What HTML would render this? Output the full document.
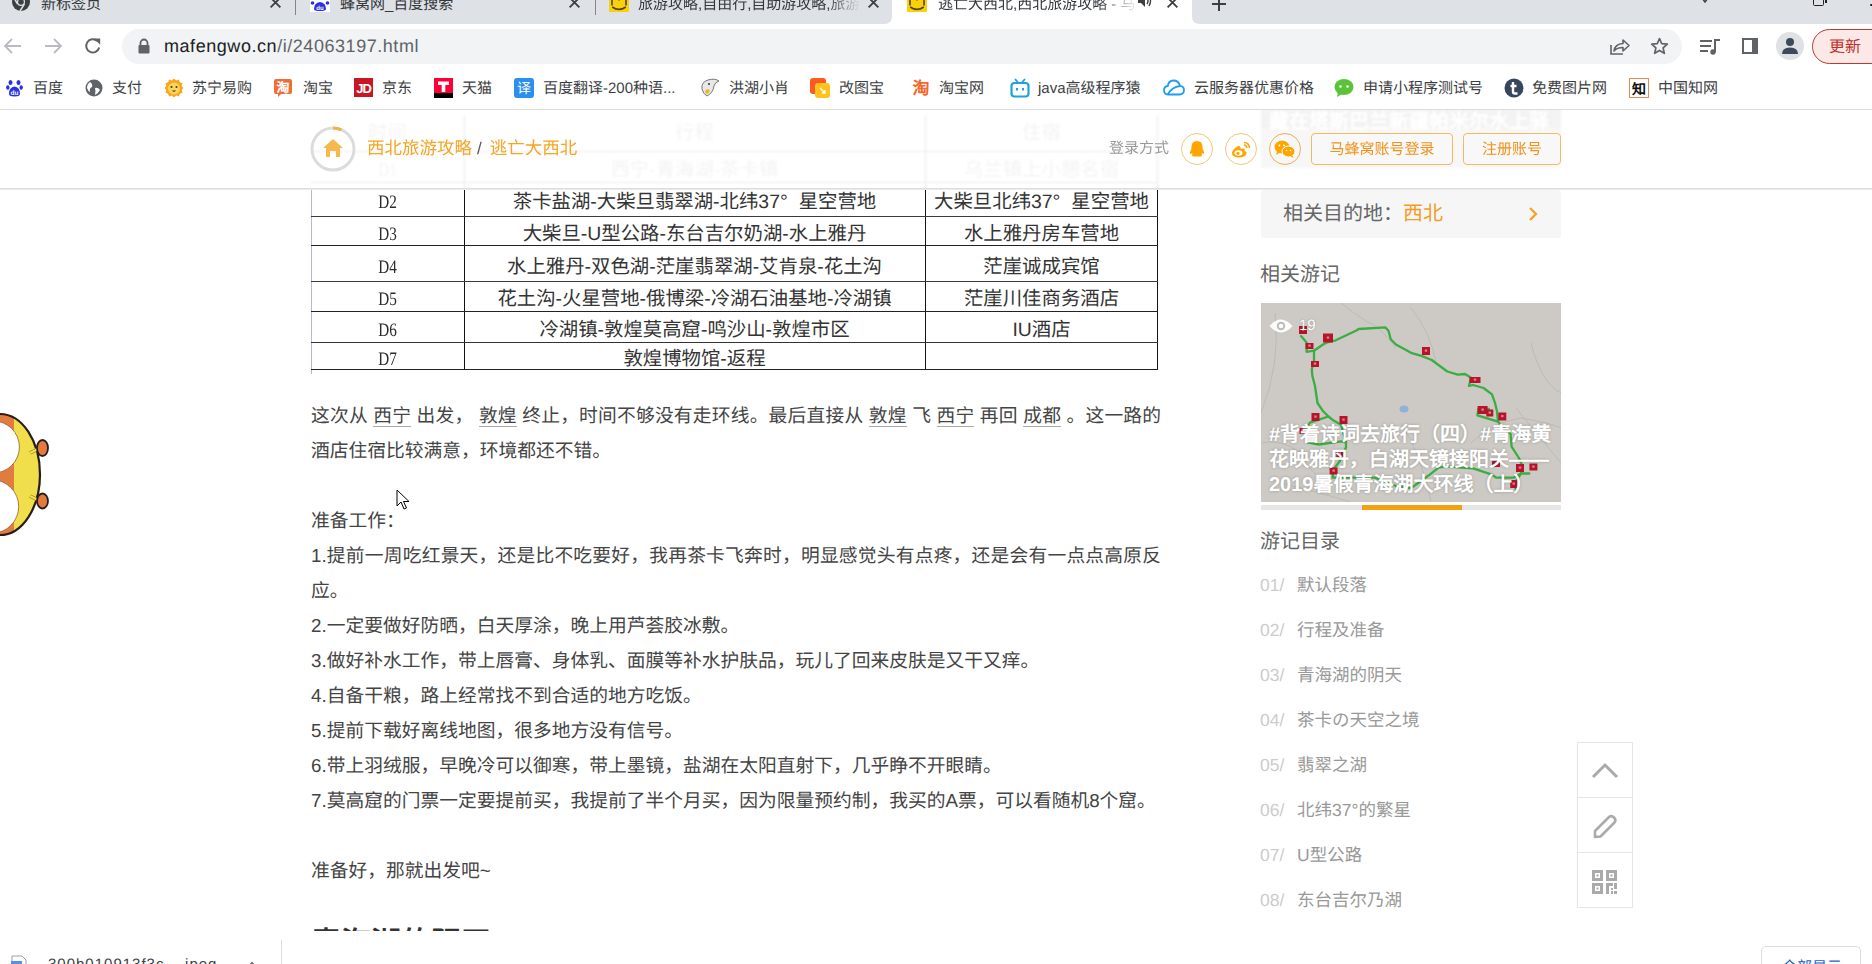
<!DOCTYPE html>
<html lang="zh-CN"><head><meta charset="utf-8">
<style>
*{margin:0;padding:0;box-sizing:border-box}
html,body{width:1872px;height:964px;overflow:hidden;background:#fff;font-family:"Liberation Sans",sans-serif;position:relative;text-rendering:geometricPrecision}
.a{position:absolute}
.nw{white-space:nowrap}
/* chrome */
#tabs{left:0;top:0;width:1872px;height:24px;background:#dee1e6}
.tabt{font-size:15px;color:#34373b;top:-5.3px;line-height:20px}
#toolbar{left:0;top:24px;width:1872px;height:46px;background:#fff}
#omni{left:122px;top:29px;width:1560px;height:35px;border-radius:18px;background:#f1f3f4}
#bm{left:0;top:70px;width:1872px;height:40px;background:#fff;border-bottom:1px solid #dadce0}
.bt{font-size:15px;color:#3c4043;top:79px;line-height:20px}
.bi{top:79px;width:16px;height:16px}
/* page */
#page{left:0;top:110px;width:1872px;height:822px;overflow:hidden;background:#fff}
</style></head><body>
<!-- TAB STRIP -->
<div id="tabs" class="a"></div>
<svg class="a" style="left:11px;top:-8px" width="20" height="20" viewBox="0 0 20 20"><circle cx="10" cy="10" r="9" fill="#3c4043"/><circle cx="10" cy="10" r="4" fill="#dee1e6"/><circle cx="10" cy="10" r="2.8" fill="#3c4043"/><path d="M10 6 L18.5 6" stroke="#dee1e6" stroke-width="1.5"/><path d="M6.6 12 L2.5 5" stroke="#dee1e6" stroke-width="1.5"/><path d="M13.4 12 L9 19" stroke="#dee1e6" stroke-width="1.5"/></svg>
<div class="a tabt nw" style="left:41px">新标签页</div>
<svg class="a" style="left:269px;top:-4px" width="13" height="13" viewBox="0 0 12 12"><path d="M1.5 1.5L10.5 10.5M10.5 1.5L1.5 10.5" stroke="#3c4043" stroke-width="1.7"/></svg>
<div class="a" style="left:295px;top:0;width:1px;height:15px;background:#80868b"></div>
<svg class="a" style="left:310px;top:-6px" width="20" height="18" viewBox="0 0 20 18"><rect width="20" height="18" fill="#fff"/><circle cx="5" cy="4" r="2" fill="#2932e1"/><circle cx="15" cy="4" r="2" fill="#2932e1"/><circle cx="2.5" cy="9" r="1.8" fill="#2932e1"/><circle cx="17.5" cy="9" r="1.8" fill="#2932e1"/><path d="M4 15 Q4 9 10 8 Q16 9 16 15 Q16 17 10 17 Q4 17 4 15Z" fill="#2932e1"/><text x="10" y="16" font-size="6" fill="#fff" text-anchor="middle" font-family="Liberation Sans" font-weight="bold">du</text></svg>
<div class="a tabt nw" style="left:340px">蜂窝网_百度搜索</div>
<svg class="a" style="left:568px;top:-4px" width="13" height="13" viewBox="0 0 12 12"><path d="M1.5 1.5L10.5 10.5M10.5 1.5L1.5 10.5" stroke="#3c4043" stroke-width="1.7"/></svg>
<div class="a" style="left:595px;top:0;width:1px;height:15px;background:#80868b"></div>
<svg class="a" style="left:609px;top:-8px" width="20" height="20" viewBox="0 0 20 20"><rect width="20" height="20" rx="1" fill="#f7d20c"/><path d="M3 2V13.5M17 2V13.5" stroke="#5a4300" stroke-width="1.6"/><circle cx="10" cy="7.5" r="1" fill="#5a4300"/><path d="M3.2 15Q10 19.8 16.8 15" stroke="#5a4300" stroke-width="1.6" fill="none"/></svg>
<div class="a tabt nw" style="left:638px;width:222px;overflow:hidden;-webkit-mask-image:linear-gradient(90deg,#000 85%,transparent)">旅游攻略,自由行,自助游攻略,旅游社区</div>
<svg class="a" style="left:867px;top:-4px" width="13" height="13" viewBox="0 0 12 12"><path d="M1.5 1.5L10.5 10.5M10.5 1.5L1.5 10.5" stroke="#3c4043" stroke-width="1.7"/></svg>
<!-- active tab -->
<div class="a" style="left:892px;top:-10px;width:300px;height:34px;background:#fff;border-radius:8px 8px 0 0"></div>
<svg class="a" style="left:884px;top:16px" width="8" height="8" viewBox="0 0 8 8"><path d="M0 8 Q8 8 8 0 V8Z" fill="#fff"/></svg>
<svg class="a" style="left:1192px;top:16px" width="8" height="8" viewBox="0 0 8 8"><path d="M8 8 Q0 8 0 0 V8Z" fill="#fff"/></svg>
<svg class="a" style="left:907px;top:-8px" width="20" height="20" viewBox="0 0 20 20"><rect width="20" height="20" rx="1" fill="#f7d20c"/><path d="M3 2V13.5M17 2V13.5" stroke="#5a4300" stroke-width="1.6"/><circle cx="10" cy="7.5" r="1" fill="#5a4300"/><path d="M3.2 15Q10 19.8 16.8 15" stroke="#5a4300" stroke-width="1.6" fill="none"/></svg>
<div class="a tabt nw" style="left:938px;width:200px;overflow:hidden;-webkit-mask-image:linear-gradient(90deg,#000 80%,transparent)">逃亡大西北,西北旅游攻略 - 马蜂窝</div>
<svg class="a" style="left:1137px;top:-5px" width="16" height="14" viewBox="0 0 16 14"><path d="M1 4H4L8 0V12L4 8H1Z" fill="#3c4043"/><path d="M10 3Q12 6 10 9M12 1Q15 6 12 11" stroke="#3c4043" stroke-width="1.4" fill="none"/></svg>
<svg class="a" style="left:1166px;top:-4px" width="13" height="13" viewBox="0 0 12 12"><path d="M1.5 1.5L10.5 10.5M10.5 1.5L1.5 10.5" stroke="#3c4043" stroke-width="1.7"/></svg>
<svg class="a" style="left:1211px;top:-4px" width="16" height="16" viewBox="0 0 16 16"><path d="M8 1V15M1 8H15" stroke="#3c4043" stroke-width="2"/></svg>
<svg class="a" style="left:1699px;top:-5px" width="12" height="9" viewBox="0 0 12 9"><path d="M1.5 1L6 7L10.5 1" stroke="#3c4043" stroke-width="1.5" fill="none"/></svg>
<div class="a" style="left:1813px;top:-5px;width:11px;height:11px;border:1.5px solid #222;border-radius:1.5px"></div><div class="a" style="left:1825px;top:0;width:1.5px;height:3px;background:#222"></div>
<div class="a" style="left:1870px;top:3.5px;width:2.5px;height:2.5px;background:#222;border-radius:50%"></div>
<!-- TOOLBAR -->
<div id="toolbar" class="a"></div>
<svg class="a" style="left:3px;top:37px" width="20" height="18" viewBox="0 0 20 18"><path d="M18 9H3M9 2L2 9L9 16" stroke="#b8bbbf" stroke-width="1.8" fill="none"/></svg>
<svg class="a" style="left:43px;top:37px" width="20" height="18" viewBox="0 0 20 18"><path d="M2 9H17M11 2L18 9L11 16" stroke="#b8bbbf" stroke-width="1.8" fill="none"/></svg>
<svg class="a" style="left:83px;top:36px" width="20" height="20" viewBox="0 0 20 20"><path d="M16.2 11.5A6.6 6.6 0 1 1 14.3 5" stroke="#5f6368" stroke-width="2" fill="none"/><path d="M11 2.5H17.2V8.7Z" fill="#5f6368"/></svg>
<div id="omni" class="a"></div>
<svg class="a" style="left:137px;top:38px" width="14" height="16" viewBox="0 0 14 16"><path d="M3.5 7V5A3.5 3.5 0 0 1 10.5 5V7" stroke="#5f6368" stroke-width="1.8" fill="none"/><rect x="1.5" y="7" width="11" height="8.5" rx="1" fill="#5f6368"/></svg>
<div class="a nw" style="left:164px;top:34px;font-size:18px;line-height:24px;color:#202124;letter-spacing:0.55px">mafengwo.cn<span style="color:#5f6368">/i/24063197.html</span></div>
<svg class="a" style="left:1609px;top:36px" width="22" height="20" viewBox="0 0 22 20"><path d="M2 9V18H14" stroke="#5f6368" stroke-width="1.6" fill="none"/><path d="M5 15Q6 8 14 7.5V4L20 9.5L14 15V11.5Q8 11.5 5 15Z" stroke="#5f6368" stroke-width="1.6" fill="none" stroke-linejoin="round"/></svg>
<svg class="a" style="left:1650px;top:37px" width="19" height="18" viewBox="0 0 24 23"><path d="M12 2L14.9 8.6L22 9.2L16.6 13.9L18.2 20.9L12 17.2L5.8 20.9L7.4 13.9L2 9.2L9.1 8.6Z" stroke="#5f6368" stroke-width="2.2" fill="none" stroke-linejoin="round"/></svg>
<svg class="a" style="left:1700px;top:38px" width="21" height="17" viewBox="0 0 21 17"><path d="M0 3H12M0 8H11M0 13H8" stroke="#5f6368" stroke-width="2"/><path d="M15 14V2H20" stroke="#5f6368" stroke-width="2" fill="none"/><circle cx="13" cy="14" r="2.7" fill="#5f6368"/></svg>
<svg class="a" style="left:1741px;top:37px" width="18" height="18" viewBox="0 0 18 18"><rect x="1" y="1" width="16" height="16" fill="#5f6368"/><rect x="3" y="3" width="8" height="12" fill="#fff"/></svg>
<div class="a" style="left:1776px;top:32px;width:28px;height:28px;border-radius:50%;background:#dfe1e5"></div>
<svg class="a" style="left:1780px;top:37px" width="20" height="18" viewBox="0 0 20 18"><circle cx="10" cy="5" r="4" fill="#3c4a5c"/><path d="M2 17Q2 10.5 10 10.5Q18 10.5 18 17Z" fill="#3c4a5c"/></svg>
<div class="a" style="left:1812px;top:29px;width:80px;height:35px;border-radius:17.5px;background:#fce9e7;border:1.5px solid #b93a30"></div>
<div class="a nw" style="left:1829px;top:37px;font-size:16px;line-height:22px;color:#c0302a">更新</div>
<!-- BOOKMARKS -->
<div id="bm" class="a"></div>
<svg class="a" style="left:6px;top:79px" width="17" height="18" viewBox="0 0 17 18"><ellipse cx="4.5" cy="3.5" rx="2" ry="2.5" fill="#2932e1"/><ellipse cx="12.5" cy="3.5" rx="2" ry="2.5" fill="#2932e1"/><ellipse cx="1.8" cy="8.5" rx="1.7" ry="2.2" fill="#2932e1"/><ellipse cx="15.2" cy="8.5" rx="1.7" ry="2.2" fill="#2932e1"/><path d="M3 15Q3 8 8.5 7.5Q14 8 14 15Q14 17.5 8.5 17.5Q3 17.5 3 15Z" fill="#2932e1"/><text x="8.5" y="16.3" font-size="6.5" fill="#fff" text-anchor="middle" font-family="Liberation Sans" font-weight="bold">du</text></svg>
<div class="a bt nw" style="left:33px">百度</div>
<svg class="a" style="left:85px;top:79px" width="18" height="18" viewBox="0 0 18 18"><circle cx="9" cy="9" r="8.5" fill="#5f6368"/><path d="M5 3Q8 5 7 8Q4 9 5 13Q3 12 2 9Q2 5 5 3Z" fill="#fff"/><path d="M10 9Q13 8 15 11Q13 15 10 16Q11 12 10 9Z" fill="#fff"/></svg>
<div class="a bt nw" style="left:112px">支付</div>
<svg class="a" style="left:164px;top:78px" width="20" height="20" viewBox="0 0 20 20"><path d="M10 0.5L12.2 2.4L15 1.6L15.8 4.3L18.5 5.2L17.7 8L19.5 10L17.7 12L18.5 14.8L15.8 15.7L15 18.4L12.2 17.6L10 19.5L7.8 17.6L5 18.4L4.2 15.7L1.5 14.8L2.3 12L0.5 10L2.3 8L1.5 5.2L4.2 4.3L5 1.6L7.8 2.4Z" fill="#f7a71b"/><circle cx="10" cy="10.5" r="6" fill="#ffd25a"/><circle cx="7.5" cy="9" r="1" fill="#333"/><circle cx="12.5" cy="9" r="1" fill="#333"/><path d="M8 12.5Q10 15 12 12.5Z" fill="#333"/></svg>
<div class="a bt nw" style="left:192px">苏宁易购</div>
<svg class="a" style="left:273px;top:78px" width="20" height="20" viewBox="0 0 20 20"><path d="M3 1H17Q19 1 19 3V14Q19 16 17 16H8L5 19V16H3Q1 16 1 14V3Q1 1 3 1Z" fill="#f26c3a"/><text x="10" y="13.5" font-size="13" fill="#fff" text-anchor="middle" font-weight="bold">淘</text></svg>
<div class="a bt nw" style="left:303px">淘宝</div>
<svg class="a" style="left:354px;top:78px" width="19" height="19" viewBox="0 0 19 19"><rect width="19" height="19" fill="#c81623"/><text x="9.5" y="15" font-size="13" fill="#fff" text-anchor="middle" font-family="Liberation Sans" font-weight="bold" letter-spacing="-1">JD</text></svg>
<div class="a bt nw" style="left:382px">京东</div>
<svg class="a" style="left:434px;top:78px" width="19" height="20" viewBox="0 0 19 20"><rect width="19" height="20" fill="#ff0036"/><rect y="15" width="19" height="5" fill="#000"/><path d="M4 3.5H15V7H11.3V14H7.7V7H4Z" fill="#fff"/></svg>
<div class="a bt nw" style="left:462px">天猫</div>
<svg class="a" style="left:514px;top:78px" width="20" height="20" viewBox="0 0 20 20"><rect width="20" height="20" rx="3" fill="#2b8ef0"/><text x="10" y="15" font-size="14" fill="#fff" text-anchor="middle">译</text></svg>
<div class="a bt nw" style="left:543px">百度翻译-200种语...</div>
<svg class="a" style="left:699px;top:77px" width="22" height="22" viewBox="0 0 22 22"><path d="M3 12Q2 5 9 3Q16 1 20 4Q16 5 15 9Q14 16 8 19Q4 17 3 12Z" fill="#e8e8e8" stroke="#777" stroke-width="1"/><path d="M6 14Q8 11 11 13Q10 17 7 17Z" fill="#f0b429"/><circle cx="10" cy="7" r="1" fill="#333"/></svg>
<div class="a bt nw" style="left:729px">洪湖小肖</div>
<svg class="a" style="left:810px;top:78px" width="20" height="20" viewBox="0 0 20 20"><rect x="0" y="0" width="16" height="16" rx="3" fill="#fb5b22"/><rect x="5" y="5" width="15" height="15" rx="3" fill="#ffc21c"/><path d="M10 10L15 15M15 12V15H12" stroke="#fff" stroke-width="1.3" fill="none"/></svg>
<div class="a bt nw" style="left:839px">改图宝</div>
<svg class="a" style="left:911px;top:78px" width="20" height="20" viewBox="0 0 20 20"><text x="10" y="16" font-size="17" fill="#f5672c" text-anchor="middle" font-weight="bold">淘</text></svg>
<div class="a bt nw" style="left:939px">淘宝网</div>
<svg class="a" style="left:1010px;top:78px" width="20" height="20" viewBox="0 0 20 20"><path d="M5 1L8 4.5M15 1L12 4.5" stroke="#20a3dc" stroke-width="1.8"/><rect x="1.5" y="5" width="17" height="13.5" rx="3" stroke="#20a3dc" stroke-width="2.2" fill="none"/><path d="M7 10V12.5M13 10V12.5" stroke="#20a3dc" stroke-width="2"/></svg>
<div class="a bt nw" style="left:1038px">java高级程序猿</div>
<svg class="a" style="left:1163px;top:79px" width="22" height="17" viewBox="0 0 22 17"><path d="M5 15.5H16.5Q21 15.5 21 11Q21 7 17 6.8Q15.5 1.5 10.5 1.5Q5.5 1.5 4.8 7Q1 7.5 1 11.3Q1 15.5 5 15.5Z" stroke="#1d9cf0" stroke-width="1.8" fill="none"/><path d="M5 15Q9 8 17 7" stroke="#1d9cf0" stroke-width="1.8" fill="none"/></svg>
<div class="a bt nw" style="left:1194px">云服务器优惠价格</div>
<svg class="a" style="left:1334px;top:78px" width="20" height="20" viewBox="0 0 20 20"><ellipse cx="10" cy="9" rx="9.5" ry="8" fill="#5ac339"/><path d="M4 14L3 19L8 16Z" fill="#5ac339"/><circle cx="6.5" cy="8.5" r="1.2" fill="#fff"/><circle cx="13.5" cy="8.5" r="1.2" fill="#fff"/></svg>
<div class="a bt nw" style="left:1363px">申请小程序测试号</div>
<svg class="a" style="left:1504px;top:78px" width="20" height="20" viewBox="0 0 20 20"><circle cx="10" cy="10" r="9.5" fill="#36465d"/><path d="M9 4V13.5Q9 15.5 11 15.5H13.5M6.5 8H12.5" stroke="#fff" stroke-width="2.4" fill="none"/></svg>
<div class="a bt nw" style="left:1532px">免费图片网</div>
<svg class="a" style="left:1629px;top:78px" width="20" height="20" viewBox="0 0 20 20"><rect x="0.5" y="0.5" width="19" height="19" fill="#fff" stroke="#e58a5a"/><text x="10" y="15.5" font-size="14" fill="#111" text-anchor="middle" font-family="Liberation Serif" font-weight="bold">知</text></svg>
<div class="a bt nw" style="left:1658px">中国知网</div>
<div id="page" class="a">
<!-- table (abs coords minus 110) -->
<div class="a" style="left:311px;top:5px;width:847px;height:254px">
 <div class="a" style="left:0;top:67px;width:1px;height:192px;background:#b9b9c9"></div>
 <div class="a" style="left:153px;top:0;width:1px;height:254px;background:#111"></div>
 <div class="a" style="left:614px;top:0;width:1px;height:254px;background:#111"></div>
 <div class="a" style="left:846px;top:0;width:1px;height:254px;background:#111"></div>
  <div class="a" style="left:0;top:36px;width:847px;height:1px;background:#333"></div>
 <div class="a" style="left:0;top:67px;width:847px;height:1px;background:#333"></div>
 <div class="a" style="left:0;top:101px;width:847px;height:1px;background:#3a3a3a"></div>
 <div class="a" style="left:0;top:130px;width:847px;height:1px;background:#222"></div>
 <div class="a" style="left:0;top:166px;width:847px;height:1px;background:#3a3a3a"></div>
 <div class="a" style="left:0;top:196px;width:847px;height:1px;background:#222"></div>
 <div class="a" style="left:0;top:227px;width:847px;height:1px;background:#333"></div>
 <div class="a" style="left:0;top:254px;width:847px;height:1px;background:#222"></div>
</div>
<style>
.td{position:absolute;text-align:center;font-size:19.4px;color:#333;line-height:24px;white-space:nowrap;margin-top:1px}
.tdd{position:absolute;text-align:center;font-family:"Liberation Serif",serif;font-size:19px;color:#2a2a2a;line-height:24px;white-space:nowrap;margin-top:2px;transform:scaleX(0.8)}
</style>
<div class="td" style="left:311px;width:153px;top:10px;color:#888">时间</div>
<div class="td" style="left:464px;width:461px;top:10px;color:#888">行程</div>
<div class="td" style="left:925px;width:233px;top:10px;color:#888">住宿</div>
<div class="tdd" style="left:311px;width:153px;top:47px;color:#888">D1</div>
<div class="td" style="left:464px;width:461px;top:47px;color:#888">西宁-青海湖-茶卡镇</div>
<div class="td" style="left:925px;width:233px;top:47px;color:#888">乌兰镇上小憩名宿</div>
<div class="tdd" style="left:311px;width:153px;top:79px">D2</div>
<div class="td" style="left:464px;width:461px;top:79px">茶卡盐湖-大柴旦翡翠湖-北纬37°<span style="margin-left:11px"></span>星空营地</div>
<div class="td" style="left:925px;width:233px;top:79px">大柴旦北纬37°<span style="margin-left:11px"></span>星空营地</div>
<div class="tdd" style="left:311px;width:153px;top:111px">D3</div>
<div class="td" style="left:464px;width:461px;top:111px">大柴旦-U型公路-东台吉尔奶湖-水上雅丹</div>
<div class="td" style="left:925px;width:233px;top:111px">水上雅丹房车营地</div>
<div class="tdd" style="left:311px;width:153px;top:144px">D4</div>
<div class="td" style="left:464px;width:461px;top:144px">水上雅丹-双色湖-茫崖翡翠湖-艾肯泉-花土沟</div>
<div class="td" style="left:925px;width:233px;top:144px">茫崖诚成宾馆</div>
<div class="tdd" style="left:311px;width:153px;top:176px">D5</div>
<div class="td" style="left:464px;width:461px;top:176px">花土沟-火星营地-俄博梁-冷湖石油基地-冷湖镇</div>
<div class="td" style="left:925px;width:233px;top:176px">茫崖川佳商务酒店</div>
<div class="tdd" style="left:311px;width:153px;top:207px">D6</div>
<div class="td" style="left:464px;width:461px;top:207px">冷湖镇-敦煌莫高窟-鸣沙山-敦煌市区</div>
<div class="td" style="left:925px;width:233px;top:207px">IU酒店</div>
<div class="tdd" style="left:311px;width:153px;top:236px">D7</div>
<div class="td" style="left:464px;width:461px;top:236px">敦煌博物馆-返程</div>

<!-- article text -->
<style>
.p{position:absolute;left:311px;font-size:18.75px;line-height:35px;color:#444;white-space:nowrap}
.j{width:850px;text-align:justify;text-align-last:justify}
.u{border-bottom:1px solid #aaa;padding-bottom:0}
</style>
<div class="p j" style="top:288px">这次从 <span class="u">西宁</span> 出发， <span class="u">敦煌</span> 终止，时间不够没有走环线。最后直接从 <span class="u">敦煌</span> 飞 <span class="u">西宁</span> 再回 <span class="u">成都</span> 。这一路的</div>
<div class="p" style="top:323px">酒店住宿比较满意，环境都还不错。</div>
<div class="p" style="top:393px">准备工作：</div>
<div class="p j" style="top:428px">1.提前一周吃红景天，还是比不吃要好，我再茶卡飞奔时，明显感觉头有点疼，还是会有一点点高原反</div>
<div class="p" style="top:463px">应。</div>
<div class="p" style="top:498px">2.一定要做好防晒，白天厚涂，晚上用芦荟胶冰敷。</div>
<div class="p" style="top:533px">3.做好补水工作，带上唇膏、身体乳、面膜等补水护肤品，玩儿了回来皮肤是又干又痒。</div>
<div class="p" style="top:568px">4.自备干粮，路上经常找不到合适的地方吃饭。</div>
<div class="p" style="top:603px">5.提前下载好离线地图，很多地方没有信号。</div>
<div class="p" style="top:638px">6.带上羽绒服，早晚冷可以御寒，带上墨镜，盐湖在太阳直射下，几乎睁不开眼睛。</div>
<div class="p" style="top:673px">7.莫高窟的门票一定要提前买，我提前了半个月买，因为限量预约制，我买的A票，可以看随机8个窟。</div>
<div class="p" style="top:743px">准备好，那就出发吧~</div>
<div class="p" style="top:814px;font-size:30px;font-weight:bold;color:#333;line-height:40px">青海湖的阴天</div>

<!-- sidebar image behind header -->
<div class="a" style="left:1261px;top:-40px;width:300px;height:98px;background:linear-gradient(#808080 0,#808080 58px,#a9a9ac 58px);overflow:hidden">
 <div class="a nw" style="left:8px;top:40px;font-size:20px;line-height:25px;color:#fff;font-weight:bold">藏在塔斯巴兰新疆帕米尔水上驿</div>
 <div class="a nw" style="left:8px;top:65px;font-size:20px;line-height:25px;color:#f4f4f4;font-weight:bold">站</div>
</div>

<!-- HEADER overlay -->
<div class="a" style="left:0;top:0;width:1872px;height:79px;background:rgba(255,255,255,0.9);-webkit-backdrop-filter:blur(1px);backdrop-filter:blur(1px);border-bottom:1px solid #dcdcdc;box-shadow:0 1px 0 #ececec"></div>
<svg class="a" style="left:310px;top:15.5px" width="46" height="46" viewBox="0 0 46 46"><circle cx="23" cy="23" r="21" stroke="#dcdcdc" stroke-width="3" fill="none"/><path d="M23 2 A21 21 0 0 1 31.5 3.8" stroke="#f2b24a" stroke-width="3" fill="none"/><path d="M23 13 L33 22 H30 V31 H26 V25 H20 V31 H16 V22 H13 Z" fill="#f7b84d"/></svg>
<div class="a nw" style="left:367px;top:26px;font-size:17.5px;line-height:24px;color:#f5a524">西北旅游攻略<span style="color:#555;font-size:17px;padding:0 8px 0 5px">/</span>逃亡大西北</div>
<div class="a nw" style="left:1109px;top:29px;font-size:15px;line-height:20px;color:#999">登录方式</div>
<svg class="a" style="left:1181px;top:133px;display:none" width="1" height="1"></svg>
<div class="a" style="left:1181px;top:23px;width:32px;height:32px;border-radius:50%;border:1.5px solid #f5c57a"></div>
<div class="a" style="left:1225px;top:23px;width:32px;height:32px;border-radius:50%;border:1.5px solid #f5c57a"></div>
<div class="a" style="left:1269px;top:23px;width:32px;height:32px;border-radius:50%;border:1.5px solid #f0ad4e"></div>
<svg class="a" style="left:1187px;top:29px" width="20" height="20" viewBox="0 0 20 20"><path d="M10 2Q15.5 2 15.5 8Q15.5 10 16.5 12Q18 14.5 16 15Q15 13.5 14.5 15Q16 17 13 17.5H7Q4 17 5.5 15Q5 13.5 4 15Q2 14.5 3.5 12Q4.5 10 4.5 8Q4.5 2 10 2Z" fill="#ffa500"/></svg>
<svg class="a" style="left:1230px;top:29px" width="22" height="20" viewBox="0 0 22 20"><path d="M8.5 7Q3 9.5 2 13.5Q1.5 18 8.5 18.5Q15.5 18.5 16.5 14.5Q17 12.5 14.5 12Q15.5 9 12.5 9.5Q10 10.5 10.5 8.5Q10.5 6.5 8.5 7Z" fill="#ffa500"/><ellipse cx="8.5" cy="14" rx="4" ry="2.8" fill="#fff"/><circle cx="8" cy="14.3" r="1.6" fill="#ffa500"/><path d="M14 3.5Q19 3.5 19.5 9M14 6Q16.5 6 17 9" stroke="#ffa500" stroke-width="1.6" fill="none"/></svg>
<svg class="a" style="left:1274px;top:29px" width="22" height="20" viewBox="0 0 22 20"><ellipse cx="8" cy="8" rx="7.5" ry="6.5" fill="#ffa500"/><path d="M3 12L2 16L6 13.5Z" fill="#ffa500"/><ellipse cx="14.5" cy="12.5" rx="6.5" ry="5.5" fill="#ffa500" stroke="#fff" stroke-width="1"/><path d="M18 16L19.5 19L16 17Z" fill="#ffa500"/><circle cx="5.5" cy="6.5" r="0.9" fill="#fff"/><circle cx="10" cy="6.5" r="0.9" fill="#fff"/><circle cx="12.5" cy="11.5" r="0.8" fill="#fff"/><circle cx="16.5" cy="11.5" r="0.8" fill="#fff"/></svg>
<div class="a nw" style="left:1311px;top:23px;width:142px;height:32px;border:1px solid #f2ba62;border-radius:4px;background:rgba(250,250,252,0.55);font-size:15px;line-height:32px;text-align:center;color:#f0921a">马蜂窝账号登录</div>
<div class="a nw" style="left:1463px;top:23px;width:98px;height:32px;border:1px solid #f2ba62;border-radius:4px;background:rgba(250,250,252,0.55);font-size:15px;line-height:32px;text-align:center;color:#f0921a">注册账号</div>

<!-- SIDEBAR -->
<div class="a" style="left:1261px;top:80px;width:300px;height:48px;background:#f6f6f6;border-radius:3px"></div>
<div class="a nw" style="left:1283px;top:92px;font-size:20px;line-height:24px;color:#666">相关目的地：<span style="color:#f39c1f;padding-left:0">西北</span></div>
<svg class="a" style="left:1527px;top:96px" width="12" height="16" viewBox="0 0 12 16"><path d="M3 2L9 8L3 14" stroke="#f5a524" stroke-width="2.4" fill="none"/></svg>
<div class="a nw" style="left:1260px;top:153px;font-size:20px;line-height:24px;color:#666">相关游记</div>
<!-- map image -->
<div class="a" style="left:1261px;top:193px;width:300px;height:199px;overflow:hidden;background:#cdcac5">
<svg class="a" style="left:0;top:0" width="300" height="199" viewBox="0 0 300 199">
 <path d="M80 0Q95 12 105 18Q120 24 135 45M14 10Q20 60 0 110M0 140Q20 135 40 150Q45 165 60 175M150 5Q170 30 175 60M210 140Q230 120 260 115Q290 120 300 125M255 105Q275 130 300 160M20 180Q60 190 90 199M140 120Q160 150 170 199M270 40Q280 80 300 90" stroke="#b9b6b1" stroke-width="0.8" fill="none"/>
 <ellipse cx="143" cy="106" rx="4.5" ry="3.5" fill="#8fb2d9"/>
 <g stroke="#3aad43" stroke-width="2.3" fill="none" stroke-linejoin="round" stroke-linecap="round">
  <path d="M40 33L45.6 39.4L45.6 48.8L53 47.7L62 41.5L66 39.4L74.7 37.3L95.4 27.5L97.5 26L124.5 24.4L127.6 28L129.7 36.3L134.9 41.5L150 49.8L160.4 52.9L170.7 57L186.3 68.5L196.7 71.6L204 71L210 74.7L208 83L212 82L222.6 85L231 91.3L234 100L236 108.3L237 118.7L249.6 131L250.6 143.6L257.9 155L261 162L260 170.5L268.3 170.5"/>
  <path d="M53 47.7L53 58L50.8 66.4L51.3 72.6L54 83L56.5 100L62.2 108.3L67.4 113.5L72.6 117.6L80 121.8L85 139.4L85 144.6L81 151.9L78.8 158L72.6 166.4L71.6 174.7L93.4 174.7L114 174.7L134.9 183L150 185L153 183L168.7 171.6L178 164.3L189.4 163.3L196.7 164.3L212 165.4L231 171.6L235 174.7L252.7 174.7L260 170.5L253 181L255 187"/>
  <path d="M67.4 113.5L58 116.6L48.8 119.7L44.6 127L46.7 139.4L58 141.5L80 138.4L85 139.4"/>
  <path d="M237 118.7L216.4 112.4L217.4 106L228 106"/>
 </g>
 <g fill="#b5142b"><rect x="38.0" y="23.0" width="8" height="8"/><rect x="44.5" y="40.0" width="8" height="6"/><rect x="62.0" y="30.5" width="10" height="9"/><rect x="50.0" y="58.0" width="8" height="6"/><rect x="161.0" y="44.0" width="8" height="8"/><rect x="208.5" y="74.0" width="11" height="6"/><rect x="50.5" y="110.0" width="8" height="8"/><rect x="78.5" y="113.0" width="8" height="8"/><rect x="38.5" y="125.0" width="6" height="6"/><rect x="75.3" y="148.0" width="7" height="6"/><rect x="68.6" y="164.5" width="8" height="7"/><rect x="216.6" y="103.0" width="10" height="8"/><rect x="225.3" y="106.5" width="7" height="7"/><rect x="237.3" y="109.5" width="8" height="8"/><rect x="255.0" y="161.0" width="8" height="8"/><rect x="268.4" y="160.5" width="8" height="7"/><rect x="249.2" y="177.0" width="7" height="8"/><rect x="231.0" y="158.0" width="8" height="6"/></g>
 <g fill="#e8a0a8" opacity="0.8"><rect x="40.8" y="25.5" width="2.4" height="2.2"/><rect x="47.3" y="41.5" width="2.4" height="2.2"/><rect x="65.8" y="33.5" width="2.4" height="2.2"/><rect x="52.8" y="59.5" width="2.4" height="2.2"/><rect x="163.8" y="46.5" width="2.4" height="2.2"/><rect x="212.8" y="75.5" width="2.4" height="2.2"/><rect x="53.3" y="112.5" width="2.4" height="2.2"/><rect x="81.3" y="115.5" width="2.4" height="2.2"/><rect x="40.3" y="126.5" width="2.4" height="2.2"/><rect x="77.6" y="149.5" width="2.4" height="2.2"/><rect x="71.4" y="166.5" width="2.4" height="2.2"/><rect x="220.4" y="105.5" width="2.4" height="2.2"/><rect x="227.6" y="108.5" width="2.4" height="2.2"/><rect x="240.1" y="112.0" width="2.4" height="2.2"/><rect x="257.8" y="163.5" width="2.4" height="2.2"/><rect x="271.2" y="162.5" width="2.4" height="2.2"/><rect x="251.5" y="179.5" width="2.4" height="2.2"/><rect x="233.8" y="159.5" width="2.4" height="2.2"/></g>
</svg>
<svg class="a" style="left:7px;top:14px" width="26" height="18" viewBox="0 0 26 18"><path d="M1.5 9Q13 -4 24.5 9Q13 22 1.5 9Z" fill="#fff" opacity="0.95"/><circle cx="13" cy="9" r="4.2" fill="#bbb"/><circle cx="13" cy="9" r="2.3" fill="#fff"/></svg>
<div class="a nw" style="left:38px;top:13px;font-size:15px;line-height:20px;color:#fff;text-shadow:0 0 2px rgba(0,0,0,0.3)">19</div>
<div class="a nw" style="left:8px;top:120px;font-size:20px;line-height:25px;color:#fff;font-weight:bold;text-shadow:0 0 3px rgba(0,0,0,0.25)">#背着诗词去旅行（四）#青海黄<br>花映雅丹，白湖天镜接阳关——<br>2019暑假青海湖大环线（上）</div>
</div>
<div class="a" style="left:1261px;top:395px;width:300px;height:5px;background:#e6e6e6"></div>
<div class="a" style="left:1362px;top:395px;width:100px;height:5px;background:#f5a00f"></div>
<div class="a nw" style="left:1260px;top:420px;font-size:20px;line-height:24px;color:#666">游记目录</div>
<style>
.tn{position:absolute;left:1260px;font-size:17.5px;line-height:24px;color:#ccc;white-space:nowrap;margin-top:1px}
.tt{position:absolute;left:1297px;font-size:17.5px;line-height:24px;color:#999;white-space:nowrap;margin-top:1px}
</style>
<div class="tn" style="top:462px">01/</div><div class="tt" style="top:462px">默认段落</div>
<div class="tn" style="top:507px">02/</div><div class="tt" style="top:507px">行程及准备</div>
<div class="tn" style="top:552px">03/</div><div class="tt" style="top:552px">青海湖的阴天</div>
<div class="tn" style="top:597px">04/</div><div class="tt" style="top:597px">茶卡の天空之境</div>
<div class="tn" style="top:642px">05/</div><div class="tt" style="top:642px">翡翠之湖</div>
<div class="tn" style="top:687px">06/</div><div class="tt" style="top:687px">北纬37°的繁星</div>
<div class="tn" style="top:732px">07/</div><div class="tt" style="top:732px">U型公路</div>
<div class="tn" style="top:777px">08/</div><div class="tt" style="top:777px">东台吉尔乃湖</div>

<!-- float toolbar -->
<div class="a" style="left:1577px;top:632px;width:56px;height:166px;border:1px solid #e5e5e5;background:#fff"></div>
<div class="a" style="left:1577px;top:687px;width:56px;height:1px;background:#e5e5e5"></div>
<div class="a" style="left:1577px;top:742px;width:56px;height:1px;background:#e5e5e5"></div>
<svg class="a" style="left:1591px;top:652px" width="28" height="18" viewBox="0 0 28 18"><path d="M2 15L14 3L26 15" stroke="#aaa" stroke-width="3" fill="none"/></svg>
<svg class="a" style="left:1592px;top:704px" width="26" height="26" viewBox="0 0 26 26"><path d="M3 23V17L17 3Q19.5 1 22 3.5Q24.5 6 22.5 8.5L8.5 22.5Z" stroke="#aaa" stroke-width="2.6" fill="none" stroke-linejoin="round"/></svg>
<svg class="a" style="left:1592px;top:760px" width="25" height="24" viewBox="0 0 25 24"><g fill="#aaa"><path d="M0 0H11V11H0ZM3 3V8H8V3Z" fill-rule="evenodd"/><path d="M14 0H25V11H14ZM17 3V8H22V3Z" fill-rule="evenodd"/><path d="M0 13H11V24H0ZM3 16V21H8V16Z" fill-rule="evenodd"/><rect x="4.5" y="4.5" width="2" height="2"/><rect x="18.5" y="4.5" width="2" height="2"/><rect x="4.5" y="17.5" width="2" height="2"/><rect x="14" y="13" width="3" height="11"/><rect x="17" y="13" width="4" height="3"/><rect x="22" y="13" width="3" height="6"/><rect x="19" y="18" width="2" height="2"/><rect x="19" y="21" width="2" height="3"/><rect x="22" y="21" width="3" height="3"/></g></svg>

<!-- cartoon left -->
<svg class="a" style="left:0;top:290px" width="60" height="150" viewBox="0 0 60 150"><defs><clipPath id="ce"><ellipse cx="0" cy="74.5" rx="40" ry="60.5"/></clipPath></defs><ellipse cx="0" cy="74.5" rx="40" ry="60.5" fill="#f0df4a"/><g clip-path="url(#ce)"><rect x="-50" y="0" width="64" height="150" fill="#e27b3e"/></g><circle cx="-6.6" cy="47" r="26" fill="#fff" stroke="#9a5a35" stroke-width="0.8"/><circle cx="-8" cy="106.5" r="26.7" fill="#fff" stroke="#9a5a35" stroke-width="0.8"/><ellipse cx="0" cy="74.5" rx="40" ry="60.5" fill="none" stroke="#2a1c1c" stroke-width="2.2"/><path d="M30 53L38 49M30 96L38 100" stroke="#8a7a20" stroke-width="3.6"/><path d="M30 53L38 49M30 96L38 100" stroke="#f3e552" stroke-width="2"/><ellipse cx="42.5" cy="48" rx="5.5" ry="8" fill="#e27b3e" stroke="#2a1c1c" stroke-width="1.8"/><ellipse cx="42.5" cy="101" rx="5.5" ry="7.5" fill="#e27b3e" stroke="#2a1c1c" stroke-width="1.8"/></svg>
<!-- cursor -->
<svg class="a" style="left:395.5px;top:379px" width="14" height="22" viewBox="0 0 14 22"><path d="M1 1V17L5 13L8 20L10.5 19L7.5 12.5H13Z" fill="#fff" stroke="#000" stroke-width="1" stroke-linejoin="round"/></svg>
</div>
<!-- DOWNLOAD BAR -->
<div class="a" style="left:0;top:931px;width:1872px;height:33px;background:#fff"></div>
<svg class="a" style="left:10px;top:955px" width="18" height="14" viewBox="0 0 18 14"><path d="M2 1H12L16 5V14H2Z" fill="#fff" stroke="#9aa0a6" stroke-width="1"/><rect x="1" y="6" width="11" height="8" fill="#5a8dee"/></svg>
<div class="a nw" style="left:48px;top:955px;font-size:15px;line-height:20px;color:#3c4043;letter-spacing:1px">300b010913f3c....jpeg</div>
<svg class="a" style="left:246px;top:960px" width="12" height="8" viewBox="0 0 12 8"><path d="M2 7L6 3L10 7" stroke="#5f6368" stroke-width="1.6" fill="none"/></svg>
<div class="a" style="left:281px;top:940px;width:1px;height:30px;background:#dadce0"></div>
<div class="a" style="left:1761px;top:946px;width:100px;height:34px;border:1px solid #dadce0;border-radius:5px;background:#fff"></div>
<div class="a nw" style="left:1782px;top:958px;font-size:15px;line-height:20px;color:#1f5fcf">全部显示</div>

</body></html>
